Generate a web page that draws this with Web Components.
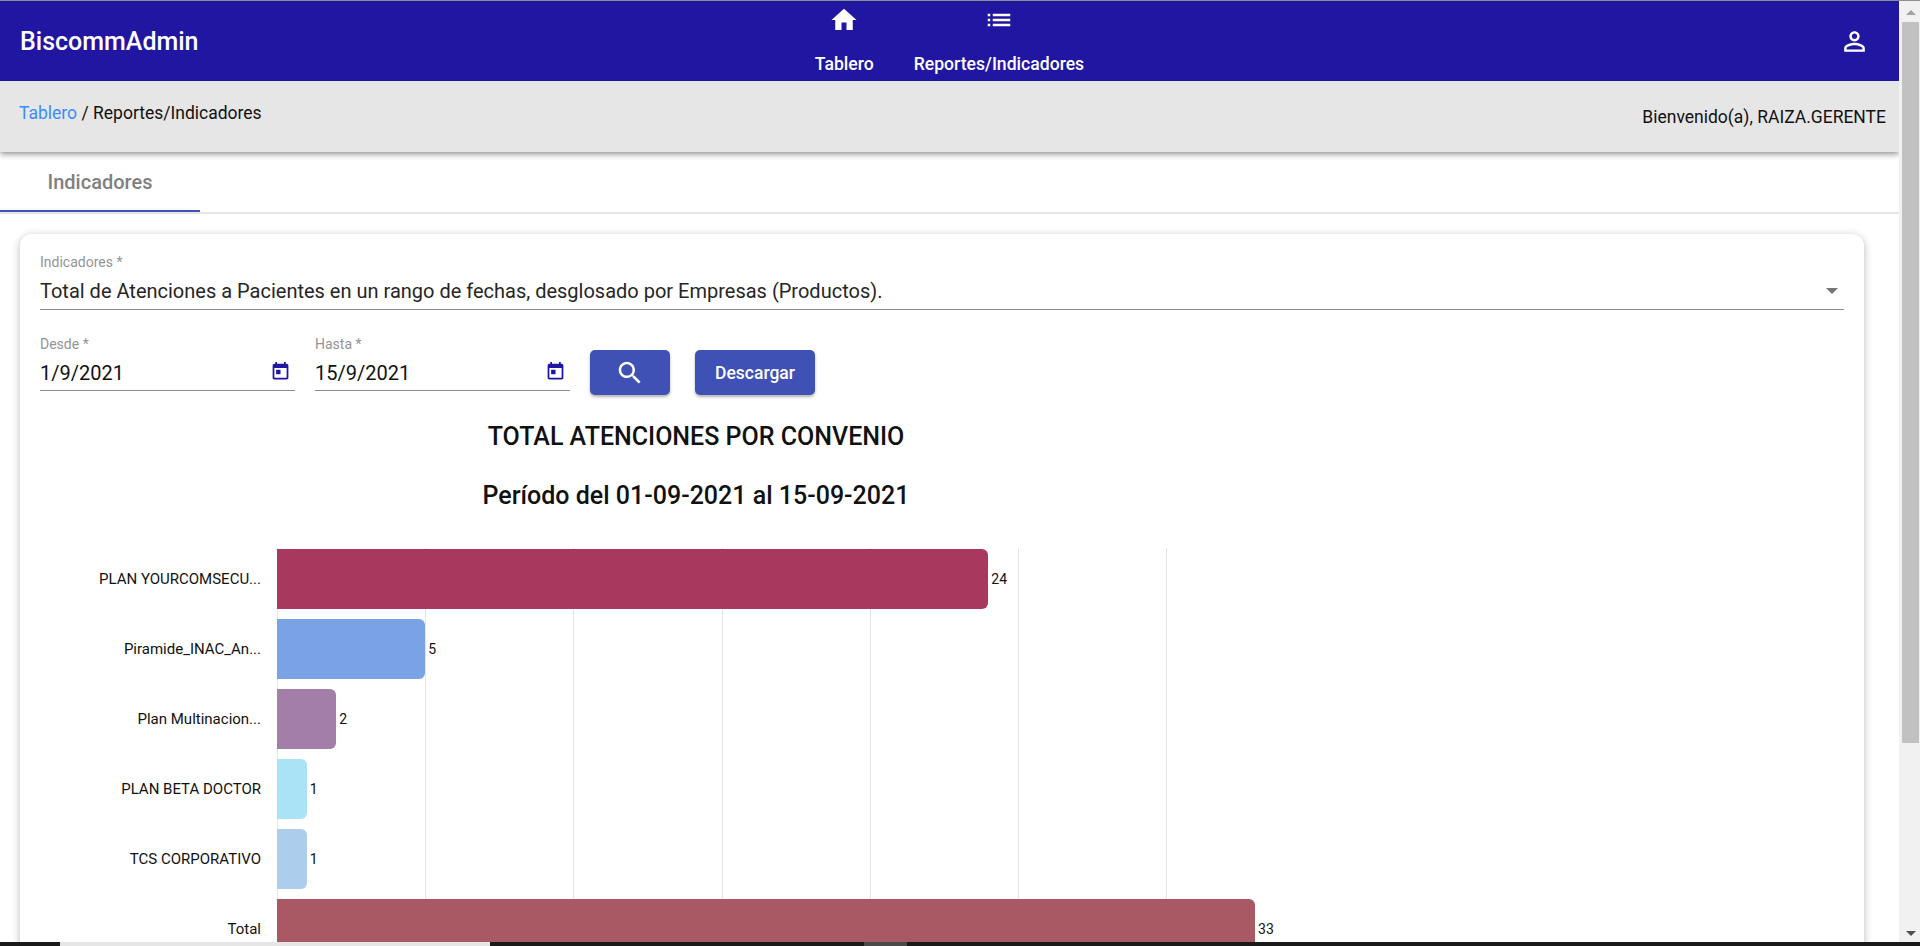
<!DOCTYPE html>
<html lang="es">
<head>
<meta charset="utf-8">
<title>BiscommAdmin</title>
<style>
  html, body { margin: 0; height: 946px; overflow: hidden; background: #fff; }
  body { display: flex; flex-direction: column; font-family: Roboto, "Liberation Sans", sans-serif; }
  .window { display: flex; flex: 1; min-height: 0; border-top: 1px solid #8a8f96; }
  .page { flex: 1; min-width: 0; display: flex; flex-direction: column; overflow: hidden; }
</style>
</head>
<body>
<div class="window">
  <div class="page">
    <app-header brand="BiscommAdmin">
      <nav-item icon="home">Tablero</nav-item>
      <nav-item icon="list">Reportes/Indicadores</nav-item>
    </app-header>
    <bread-bar user="Bienvenido(a), RAIZA.GERENTE"></bread-bar>
    <tab-bar>Indicadores</tab-bar>
    <content-card>
      <form-select label="Indicadores *">Total de Atenciones a Pacientes en un rango de fechas, desglosado por Empresas (Productos).</form-select>
      <filter-row>
        <date-field label="Desde *">1/9/2021</date-field>
        <date-field label="Hasta *">15/9/2021</date-field>
        <action-button kind="icon"></action-button>
        <action-button>Descargar</action-button>
      </filter-row>
      <chart-title>TOTAL ATENCIONES POR CONVENIO</chart-title>
      <chart-title second>Período del 01-09-2021 al 15-09-2021</chart-title>
      <bar-chart>
        <chart-row label="PLAN YOURCOMSECU..." value="24" color="#a8385d"></chart-row>
        <chart-row label="Piramide_INAC_An..." value="5" color="#7aa3e5"></chart-row>
        <chart-row label="Plan Multinacion..." value="2" color="#a27ea8"></chart-row>
        <chart-row label="PLAN BETA DOCTOR" value="1" color="#aae3f5"></chart-row>
        <chart-row label="TCS CORPORATIVO" value="1" color="#adcded"></chart-row>
        <chart-row label="Total" value="33" color="#a95963"></chart-row>
      </bar-chart>
    </content-card>
  </div>
  <win-scrollbar></win-scrollbar>
</div>
<task-strip></task-strip>

<script>
const ICONS = {
  home: 'M10 20v-6h4v6h5v-8h3L12 3 2 12h3v8z',
  list: 'M3 13h2v-2H3v2zm0 4h2v-2H3v2zm0-8h2V7H3v2zm4 4h14v-2H7v2zm0 4h14v-2H7v2zM7 7v2h14V7H7z',
  person: 'M12 5.9c1.16 0 2.1.94 2.1 2.1s-.94 2.1-2.1 2.1S9.9 9.16 9.9 8s.94-2.1 2.1-2.1m0 9c2.97 0 6.1 1.46 6.1 2.1v1.1H5.9V17c0-.64 3.13-2.1 6.1-2.1M12 4C9.79 4 8 5.79 8 8s1.79 4 4 4 4-1.79 4-4-1.79-4-4-4zm0 9c-2.67 0-8 1.34-8 4v3h16v-3c0-2.66-5.33-4-8-4z',
  today: 'M19 3h-1V1h-2v2H8V1H6v2H5c-1.11 0-2 .9-2 2v14c0 1.1.89 2 2 2h14c1.1 0 2-.9 2-2V5c0-1.1-.9-2-2-2zm0 16H5V8h14v11zM7 10h5v5H7z',
  search: 'M15.5 14h-.79l-.28-.27C15.41 12.59 16 11.11 16 9.5 16 5.91 13.09 3 9.5 3S3 5.91 3 9.5 5.91 16 9.5 16c1.61 0 3.09-.59 4.23-1.57l.27.28v.79l5 4.99L20.49 19l-4.99-5zm-6 0C7.01 14 5 11.99 5 9.5S7.01 5 9.5 5 14 7.01 14 9.5 11.99 14 9.5 14z'
};

function icon(name, size, color) {
  return `<svg width="${size}" height="${size}" viewBox="0 0 24 24" fill="${color}" style="display:block"><path d="${ICONS[name]}"/></svg>`;
}

class AppHeader extends HTMLElement {
  constructor() {
    super();
    this.attachShadow({ mode: 'open' });
  }

  connectedCallback() {
    this.shadowRoot.innerHTML = `
      <style>
        :host {
          display: grid;
          grid-template-columns: 1fr auto 1fr;
          height: 80px;
          flex-shrink: 0;
          background: #2116a1;
          color: #fff;
          position: relative;
          z-index: 3;
        }
        .brand {
          align-self: center;
          padding-left: 20px;
          font-size: 25px;
          font-weight: 500;
          line-height: 82px;
        }
        nav { display: flex; }
        .user { justify-self: end; padding: 25px 29px 0 0; }
      </style>
      <div class="brand">${this.getAttribute('brand')}</div>
      <nav><slot></slot></nav>
      <div class="user">${icon('person', 31, '#fff')}</div>
    `;
  }
}

class NavItem extends HTMLElement {
  constructor() {
    super();
    this.attachShadow({ mode: 'open' });
  }

  connectedCallback() {
    this.shadowRoot.innerHTML = `
      <style>
        :host {
          display: flex;
          flex-direction: column;
          align-items: center;
          padding: 4px 20px 0;
          font-size: 17.6px;
          font-weight: 500;
        }
        .label { margin-top: 17px; line-height: 24px; }
      </style>
      ${icon(this.getAttribute('icon'), 30, '#fff')}
      <div class="label"><slot></slot></div>
    `;
  }
}

class BreadBar extends HTMLElement {
  constructor() {
    super();
    this.attachShadow({ mode: 'open' });
  }

  connectedCallback() {
    this.shadowRoot.innerHTML = `
      <style>
        :host {
          display: flex;
          justify-content: space-between;
          height: 71px;
          flex-shrink: 0;
          padding: 0 13px 0 19px;
          background: #e6e6e6;
          color: #111;
          font-size: 17.5px;
          box-shadow: 0 2px 6px rgba(0, 0, 0, .45);
          position: relative;
          z-index: 2;
        }
        .trail { line-height: 24px; padding-top: 20px; }
        .trail a { color: #3a8dff; text-decoration: none; }
        .user { line-height: 24px; padding-top: 24px; }
      </style>
      <div class="trail"><a href="#">Tablero</a> / Reportes/Indicadores</div>
      <div class="user">${this.getAttribute('user')}</div>
    `;
  }
}

class TabBar extends HTMLElement {
  constructor() {
    super();
    this.attachShadow({ mode: 'open' });
  }

  connectedCallback() {
    this.shadowRoot.innerHTML = `
      <style>
        :host {
          display: block;
          height: 62px;
          flex-shrink: 0;
          box-sizing: border-box;
          border-bottom: 2px solid #e6e6e6;
        }
        .tab {
          box-sizing: border-box;
          width: 200px;
          height: 60px;
          border-bottom: 2px solid #3f51b5;
          text-align: center;
          line-height: 60px;
          font-size: 20px;
          font-weight: 500;
          color: #7f7f7f;
        }
      </style>
      <div class="tab"><slot></slot></div>
    `;
  }
}

class ContentCard extends HTMLElement {
  constructor() {
    super();
    this.attachShadow({ mode: 'open' });
  }

  connectedCallback() {
    this.shadowRoot.innerHTML = `
      <style>
        :host {
          display: block;
          flex-shrink: 0;
          box-sizing: border-box;
          width: 1844px;
          height: 900px;
          margin: 20px 0 0 20px;
          padding: 20px;
          background: #fff;
          border-radius: 12px;
          box-shadow: 0 2px 8px rgba(0, 0, 0, .28);
        }
      </style>
      <slot></slot>
    `;
  }
}

class FormSelect extends HTMLElement {
  constructor() {
    super();
    this.attachShadow({ mode: 'open' });
  }

  connectedCallback() {
    this.shadowRoot.innerHTML = `
      <style>
        :host { display: block; border-bottom: 1px solid #8c8c8c; padding-bottom: 6px; }
        .label { font-size: 14px; line-height: 16px; color: #949494; }
        .value {
          display: flex;
          justify-content: space-between;
          align-items: center;
          margin-top: 9px;
          font-size: 20px;
          line-height: 24px;
          color: #262626;
        }
        .arrow {
          width: 0;
          height: 0;
          margin-right: 6px;
          border-left: 6px solid transparent;
          border-right: 6px solid transparent;
          border-top: 6px solid #757575;
        }
      </style>
      <div class="label">${this.getAttribute('label')}</div>
      <div class="value"><span><slot></slot></span><span class="arrow"></span></div>
    `;
  }
}

class FilterRow extends HTMLElement {
  constructor() {
    super();
    this.attachShadow({ mode: 'open' });
  }

  connectedCallback() {
    this.shadowRoot.innerHTML = `
      <style>
        :host {
          display: flex;
          align-items: flex-start;
          height: 59px;
          margin-top: 26px;
        }
      </style>
      <slot></slot>
    `;
  }
}

class DateField extends HTMLElement {
  constructor() {
    super();
    this.attachShadow({ mode: 'open' });
  }

  connectedCallback() {
    this.shadowRoot.innerHTML = `
      <style>
        :host {
          display: block;
          width: 255px;
          margin-right: 20px;
          border-bottom: 1px solid #8c8c8c;
          padding-bottom: 5px;
        }
        .label { font-size: 14px; line-height: 16px; color: #949494; }
        .value {
          display: flex;
          justify-content: space-between;
          align-items: center;
          margin-top: 9px;
          font-size: 20px;
          line-height: 24px;
          color: #111;
        }
        .pick { margin: -3px 4px 0 0; }
      </style>
      <div class="label">${this.getAttribute('label')}</div>
      <div class="value"><span><slot></slot></span><span class="pick">${icon('today', 21, '#2116a1')}</span></div>
    `;
  }
}

class ActionButton extends HTMLElement {
  constructor() {
    super();
    this.attachShadow({ mode: 'open' });
  }

  connectedCallback() {
    const isIcon = this.getAttribute('kind') === 'icon';
    this.shadowRoot.innerHTML = `
      <style>
        :host {
          display: flex;
          justify-content: center;
          align-items: center;
          box-sizing: border-box;
          width: ${isIcon ? 80 : 120}px;
          height: 45px;
          margin: 14px 25px 0 0;
          background: #3f51b5;
          color: #fff;
          border-radius: 5px;
          font-size: 17.5px;
          font-weight: 500;
          box-shadow: 0 2px 3px rgba(0, 0, 0, .3);
        }
      </style>
      ${isIcon ? icon('search', 30, '#fff') : '<slot></slot>'}
    `;
  }
}

class ChartTitle extends HTMLElement {
  constructor() {
    super();
    this.attachShadow({ mode: 'open' });
  }

  connectedCallback() {
    this.shadowRoot.innerHTML = `
      <style>
        :host {
          display: block;
          width: 1312px;
          margin-top: ${this.hasAttribute('second') ? 29 : 27}px;
          text-align: center;
          font-size: 25px;
          font-weight: 500;
          line-height: 30px;
          color: #111;
        }
      </style>
      <slot></slot>
    `;
  }
}

class BarChart extends HTMLElement {
  constructor() {
    super();
    this.attachShadow({ mode: 'open' });
  }

  connectedCallback() {
    // gridlines every 5 units, painted behind the rows
    this.shadowRoot.innerHTML = `
      <style>
        :host {
          display: block;
          margin: 37px 0 0 237px;
          width: 891px;
          padding-top: 1px;
          border-left: 1px solid #e6e6e6;
          background: repeating-linear-gradient(90deg, transparent 0 147.2px, #e4e4e4 147.2px 148.2px);
        }
      </style>
      <slot></slot>
    `;
  }
}

class ChartRow extends HTMLElement {
  constructor() {
    super();
    this.attachShadow({ mode: 'open' });
  }

  connectedCallback() {
    const value = Number(this.getAttribute('value'));
    this.shadowRoot.innerHTML = `
      <style>
        :host {
          display: flex;
          align-items: center;
          position: relative;
          height: 60px;
          margin-bottom: 10px;
          font-size: 14px;
          color: #111;
        }
        .name {
          position: absolute;
          right: calc(100% + 17px);
          white-space: nowrap;
          font-size: 15px;
        }
        .bar {
          flex-shrink: 0;
          width: ${value * 29.64}px;
          height: 60px;
          margin-left: -1px;
          background: ${this.getAttribute('color')};
          border-radius: 0 6px 6px 0;
        }
        .value { margin: -1px 0 0 3px; }
      </style>
      <span class="name">${this.getAttribute('label')}</span>
      <div class="bar"></div>
      <span class="value">${value}</span>
    `;
  }
}

class WinScrollbar extends HTMLElement {
  constructor() {
    super();
    this.attachShadow({ mode: 'open' });
  }

  connectedCallback() {
    this.shadowRoot.innerHTML = `
      <style>
        :host {
          display: flex;
          flex-direction: column;
          align-items: center;
          flex-shrink: 0;
          width: 21px;
          box-sizing: border-box;
          padding-left: 2px;
          background: #f1f1f1;
        }
        .up, .down { width: 0; height: 0; border-left: 5px solid transparent; border-right: 5px solid transparent; }
        .up { margin-top: 9px; border-bottom: 5px solid #a3a3a3; }
        .down { margin-top: auto; margin-bottom: 6px; border-top: 5px solid #505050; }
        .thumb { width: 17px; height: 721px; margin-top: 7px; background: #c1c1c1; }
      </style>
      <div class="up"></div>
      <div class="thumb"></div>
      <div class="down"></div>
    `;
  }
}

class TaskStrip extends HTMLElement {
  constructor() {
    super();
    this.attachShadow({ mode: 'open' });
  }

  connectedCallback() {
    this.shadowRoot.innerHTML = `
      <style>
        :host {
          display: flex;
          height: 4px;
          flex-shrink: 0;
          background: #1a1a1a;
        }
        .open { width: 430px; margin-left: 60px; background: #e6e6e6; }
        .busy { width: 43px; margin-left: 374px; background: #4a4a4a; }
      </style>
      <div class="open"></div>
      <div class="busy"></div>
    `;
  }
}

customElements.define('app-header', AppHeader);
customElements.define('nav-item', NavItem);
customElements.define('bread-bar', BreadBar);
customElements.define('tab-bar', TabBar);
customElements.define('content-card', ContentCard);
customElements.define('form-select', FormSelect);
customElements.define('filter-row', FilterRow);
customElements.define('date-field', DateField);
customElements.define('action-button', ActionButton);
customElements.define('chart-title', ChartTitle);
customElements.define('bar-chart', BarChart);
customElements.define('chart-row', ChartRow);
customElements.define('win-scrollbar', WinScrollbar);
customElements.define('task-strip', TaskStrip);
</script>
</body>
</html>
